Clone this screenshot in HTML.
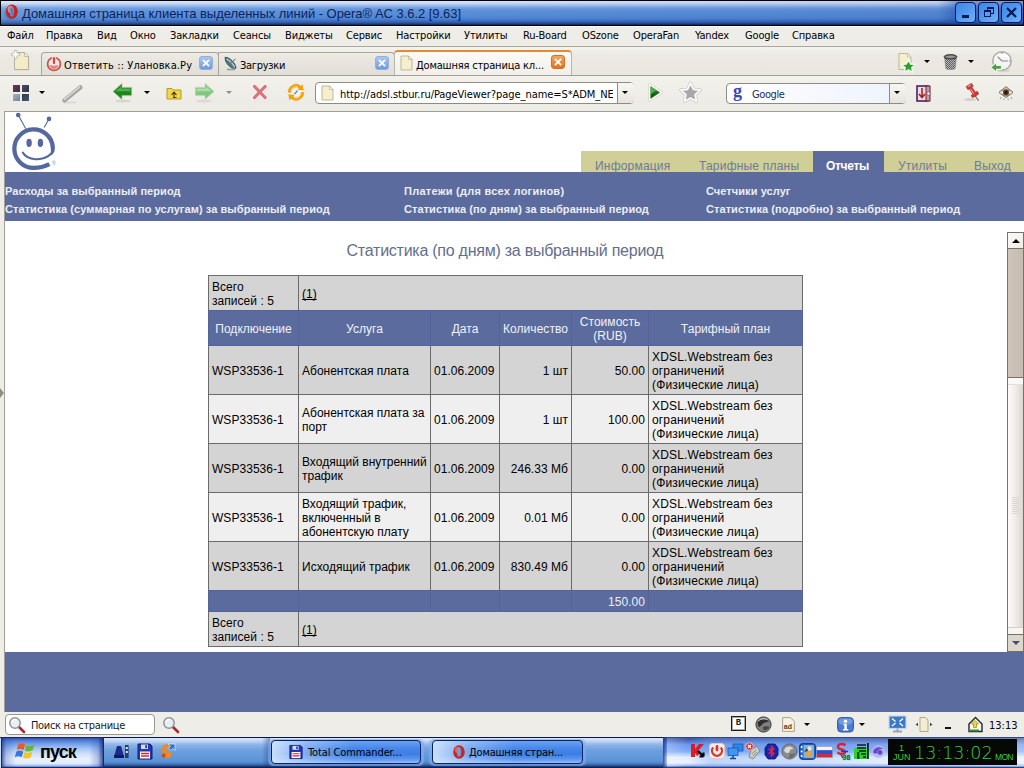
<!DOCTYPE html>
<html lang="ru">
<head>
<meta charset="utf-8">
<title>Домашняя страница клиента выделенных линий</title>
<style>
html,body{margin:0;padding:0;}
body{width:1024px;height:768px;overflow:hidden;position:relative;background:#efede7;font-family:"DejaVu Sans Condensed","DejaVu Sans","Liberation Sans",sans-serif;font-stretch:condensed;font-size:11px;color:#000;}
.abs{position:absolute;}
.t{position:absolute;white-space:nowrap;line-height:1;}
svg{position:absolute;overflow:visible;}
/* title bar */
#titlebar{left:0;top:0;width:1024px;height:26px;background:#000;}
#titlegrad{left:1px;top:1px;width:1022px;height:24px;background:linear-gradient(#d6e5fb 0%,#c6daf8 9%,#9fbfee 18%,#6d9cde 30%,#5b90d8 42%,#558bd5 60%,#4d84d2 72%,#3f72c4 81%,#2c58a6 90%,#1a3670 97%,#0c1c48 100%);}
#titleshade{left:1px;top:1px;width:1022px;height:24px;background:linear-gradient(90deg,rgba(255,255,255,.10) 0%,rgba(255,255,255,.04) 8%,rgba(255,255,255,0) 45%,rgba(10,40,120,.10) 100%);}
#titletext{left:22px;top:6px;font-family:"Liberation Sans",sans-serif;font-size:13px;line-height:15px;letter-spacing:-.04px;color:#0b1f5e;}
.wb{position:absolute;top:2px;width:19px;height:19px;border:1px solid #06185a;border-radius:4px;background:linear-gradient(135deg,#3f86e6 0%,#4f97ef 45%,#74b2f8 100%);}
/* menu */
#menubar{left:0;top:26px;width:1024px;height:20px;background:linear-gradient(#fbfaf8 0,#fbfaf8 1px,#efede7 1px);border-bottom:1px solid #aaa79c;}
.mi{position:absolute;top:29px;font-size:11px;white-space:nowrap;line-height:13px;letter-spacing:-.15px;}
/* tab bar */
#tabbar{left:0;top:47px;width:1024px;height:28px;background:linear-gradient(#f4f3ee,#ebe9e2 30%,#e9e7e0);border-bottom:1px solid #a39f94;}
.tab{position:absolute;top:52px;height:23px;box-sizing:border-box;border:1px solid #a8a59b;border-bottom:none;border-radius:4px 4px 0 0;background:linear-gradient(#eceae3,#e0ded6);}
#tab3{top:50px;height:25px;border:1px solid #b8b5ab;border-top:2px solid #e58a2e;background:linear-gradient(#fbfaf7,#f1efea);border-bottom:none;}
.tt{position:absolute;top:59px;font-size:11px;white-space:nowrap;line-height:13px;}
.cb{position:absolute;width:14px;height:14px;box-sizing:border-box;border-radius:3px;}
/* toolbar */
#toolbar{left:0;top:76px;width:1024px;height:35px;background:linear-gradient(#f3f1ec,#eceae4);}
.field{position:absolute;box-sizing:border-box;border:1px solid #8e8b82;border-radius:4px;background:#fff;}
.dd{position:absolute;width:0;height:0;border-left:3px solid transparent;border-right:3px solid transparent;border-top:3px solid #000;}
/* page */
#pageborder{left:4px;top:111px;width:1020px;height:601px;background:#a29f95;}
#page{left:5px;top:112px;width:1019px;height:600px;background:#fff;overflow:hidden;font-family:"Liberation Sans",sans-serif;font-size:12px;}
#statusbar{left:0;top:712px;width:1024px;height:26px;background:#efede7;}
#taskbar{left:0;top:737px;width:1024px;height:31px;background:linear-gradient(#0a1a5a 0,#080e2a 1px,#dde9fb 1px,#bfd5f5 4px,#8cb3e7 8px,#6fa0de 13px,#669adb 18px,#5b94d7 24px,#4a7ec4 26.5px,#3660a2 28px,#1c3876 29.5px,#08123c 31px);}
.tb{position:absolute;top:740px;height:24px;box-sizing:border-box;border:1px solid #0c2266;border-radius:4px;background:linear-gradient(90deg,rgba(225,238,255,.85) 0%,rgba(225,238,255,.35) 25%,rgba(255,255,255,0) 55%),linear-gradient(#6aa2f2 0%,#4586ea 35%,#3c7ee6 60%,#5a96ee 82%,#94bbf6 100%);}
</style>
</head>
<body>
<!-- TITLE BAR -->
<div id="titlebar" class="abs"></div>
<div id="titlegrad" class="abs"></div>
<div id="titleshade" class="abs"></div>
<div class="abs" style="left:938px;top:1px;width:85px;height:23px;background:linear-gradient(90deg,rgba(24,70,170,0),rgba(24,70,170,.42) 18px,rgba(24,70,170,.42))"></div>
<svg style="left:2px;top:3px" width="18" height="18" viewBox="0 0 18 18"><ellipse cx="8.6" cy="10" rx="6.2" ry="6.6" fill="#3a5a9a" opacity=".35"/><ellipse cx="9.9" cy="8.6" rx="5.9" ry="7.2" fill="#c4241c"/><ellipse cx="8.6" cy="6.4" rx="3" ry="3.6" fill="#f5a094" opacity=".75"/><ellipse cx="10" cy="8.8" rx="2.2" ry="4.9" fill="#5f8fd8"/><path d="M9 5.5C10 8 10.8 10 11.4 12.5" stroke="#c4241c" stroke-width="1" fill="none" opacity=".6"/></svg>
<div id="titletext" class="t">Домашняя страница клиента выделенных линий - Opera® AC 3.6.2 [9.63]</div>
<div class="wb" style="left:955px"><div class="abs" style="left:6px;top:12px;width:7px;height:3px;background:#06185a"></div></div>
<div class="wb" style="left:978px"><div class="abs" style="left:8px;top:4px;width:5px;height:4px;border:1px solid #06185a;border-top-width:2px"></div><div class="abs" style="left:5px;top:7px;width:5px;height:4px;border:1px solid #06185a;border-top-width:2px;background:#5a9cf0"></div></div>
<div class="wb" style="left:1001px"><svg style="left:4px;top:4px" width="11" height="11" viewBox="0 0 11 11"><path d="M1 1L10 10M10 1L1 10" stroke="#06185a" stroke-width="2.2"/></svg></div>

<!-- MENU BAR -->
<div id="menubar" class="abs"></div>
<div class="mi" style="left:7px">Файл</div>
<div class="mi" style="left:46px">Правка</div>
<div class="mi" style="left:97px">Вид</div>
<div class="mi" style="left:130px">Окно</div>
<div class="mi" style="left:170px">Закладки</div>
<div class="mi" style="left:233px">Сеансы</div>
<div class="mi" style="left:285px">Виджеты</div>
<div class="mi" style="left:346px">Сервис</div>
<div class="mi" style="left:396px">Настройки</div>
<div class="mi" style="left:464px">Утилиты</div>
<div class="mi" style="left:523px">Ru-Board</div>
<div class="mi" style="left:582px">OSzone</div>
<div class="mi" style="left:633px">OperaFan</div>
<div class="mi" style="left:695px">Yandex</div>
<div class="mi" style="left:745px">Google</div>
<div class="mi" style="left:792px">Справка</div>

<!-- TAB BAR -->
<div id="tabbar" class="abs"></div>
<!-- new page icon -->
<svg style="left:11px;top:50px" width="21" height="22" viewBox="0 0 21 22"><path d="M4.2 3H14L18.2 7.2V20.4H4.2Z" fill="#cfccc2" opacity=".55"/><path d="M3.5 2.5H13.5L17.5 6.5V19.5H3.5Z" fill="#f3ecc6" stroke="#b5b09c" stroke-width="1"/><path d="M13.5 2.5V6.5H17.5Z" fill="#fffbe8" stroke="#b5b09c" stroke-width=".8"/><path d="M4.6 1.6V7.4M1.7 4.5H7.5" stroke="#bdbbb4" stroke-width="3.6" stroke-linecap="round"/><path d="M4.6 2V7M2.1 4.5H7.1" stroke="#fff" stroke-width="2" stroke-linecap="round"/></svg>
<div class="tab" style="left:41px;width:178px"></div>
<div class="tab" style="left:218px;width:177px;border-top-left-radius:0"></div>
<div class="tab" id="tab3" style="left:394px;width:178px"></div>
<!-- tab1 icon: red power -->
<svg style="left:46px;top:55px" width="16" height="17" viewBox="0 0 16 17"><circle cx="8" cy="9" r="6.4" fill="#f9ecea" stroke="#d0504a" stroke-width="1.8"/><path d="M3.6 9.6A4.4 4.4 0 0 0 12.4 9.6C11 11 5 11 3.6 9.6Z" fill="#e8847c"/><rect x="6.3" y="1.6" width="3.4" height="8" rx="1.7" fill="#d8463e" stroke="#f9ecea" stroke-width="1"/></svg>
<div class="tt" style="left:64px;letter-spacing:.09px">Ответить :: Улановка.Ру</div>
<div class="cb" style="left:199px;top:56px;background:linear-gradient(#a9c6ee,#6f9bdc);border:1px solid #8fb0e2"><svg style="left:2px;top:2px" width="8" height="8" viewBox="0 0 9 9"><path d="M1 1L8 8M8 1L1 8" stroke="#fff" stroke-width="2"/></svg></div>
<!-- tab2 icon: dish -->
<svg style="left:223px;top:55px" width="16" height="17" viewBox="0 0 16 17"><path d="M2.2 2.2C7 2.5 12.5 8 13 13.2C9 15 1.2 8 2.2 2.2Z" fill="#557880" stroke="#2f4c54" stroke-width=".9"/><path d="M3.5 4C6.5 5 10.5 9 11.6 12.4" fill="none" stroke="#c9d8de" stroke-width="1.2"/><path d="M7.5 8L12.5 4" stroke="#4d6872" stroke-width="1"/><path d="M4 14.5H12" stroke="#8c9ea6" stroke-width="1.6"/></svg>
<div class="tt" style="left:240px;letter-spacing:-.3px">Загрузки</div>
<div class="cb" style="left:375px;top:56px;background:linear-gradient(#a9c6ee,#6f9bdc);border:1px solid #8fb0e2"><svg style="left:2px;top:2px" width="8" height="8" viewBox="0 0 9 9"><path d="M1 1L8 8M8 1L1 8" stroke="#fff" stroke-width="2"/></svg></div>
<!-- tab3 icon: page -->
<svg style="left:400px;top:55px" width="13" height="16" viewBox="0 0 13 16"><path d="M1 1H8.5L12 4.5V15H1Z" fill="#f5efcb" stroke="#bdb79c" stroke-width="1"/><path d="M8.5 1V4.5H12Z" fill="#fffdf0" stroke="#bdb79c" stroke-width=".8"/></svg>
<div class="tt" style="left:416px;letter-spacing:-.18px">Домашняя страница кл...</div>
<div class="cb" style="left:551px;top:55px;background:linear-gradient(#f3a664,#e0741c);border:1px solid #d96f1c"><svg style="left:2px;top:2px" width="8" height="8" viewBox="0 0 9 9"><path d="M1 1L8 8M8 1L1 8" stroke="#fff" stroke-width="2"/></svg></div>
<!-- right icons -->
<svg style="left:897px;top:52px" width="19" height="20" viewBox="0 0 19 20"><path d="M2 1.5H10.5L14 5V17.5H2Z" fill="#f5efcb" stroke="#bdb79c" stroke-width="1"/><path d="M10.5 1.5V5H14Z" fill="#fffdf0" stroke="#bdb79c" stroke-width=".8"/><path d="M11.5 7.6l2.1 4.3 4.7.6-3.5 3.2 1 4.7-4.3-2.4-4.3 2.4 1-4.7-3.5-3.2 4.7-.6z" fill="#2f9e2f" stroke="#f2f8ee" stroke-width="1.5" stroke-linejoin="round"/></svg>
<div class="dd" style="left:924px;top:60px"></div>
<svg style="left:942px;top:53px" width="17" height="18" viewBox="0 0 17 18"><defs><pattern id="mesh" width="2" height="2" patternUnits="userSpaceOnUse"><rect width="2" height="2" fill="#b9b9b9"/><rect width="1" height="1" fill="#5e5e5e"/><rect x="1" y="1" width="1" height="1" fill="#5e5e5e"/></pattern></defs><path d="M2.6 4.6L3.8 15.4C5 17 12 17 13.2 15.4L14.4 4.6Z" fill="url(#mesh)" stroke="#8a8a8a" stroke-width=".7"/><ellipse cx="8.5" cy="3.8" rx="6.4" ry="2.2" fill="#6a6a6a" stroke="#3c3c3c" stroke-width="1"/><ellipse cx="8.5" cy="3.8" rx="4.4" ry="1.1" fill="#9a9a9a"/></svg>
<div class="dd" style="left:968px;top:60px"></div>
<svg style="left:989px;top:50px" width="24" height="24" viewBox="0 0 24 24"><ellipse cx="13.5" cy="20.6" rx="8" ry="1.6" fill="#d7d4cc"/><circle cx="13" cy="11" r="9.2" fill="#f4f4f2" stroke="#b2b2ad" stroke-width="1.7"/><path d="M5.4 8.6A8 8 0 0 1 20.6 8.6C16 6.6 10 6.6 5.4 8.6Z" fill="#fff" opacity=".8"/><path d="M13 2.6V4M21.4 11H20M13 11L8.6 6.6M13 11H19" stroke="#8a8a8a" stroke-width="1.1"/><path d="M1.6 17.4L7.6 12.6V15.4H12.4V19.4H7.6V22.2Z" fill="#4aa046" stroke="#eef6ea" stroke-width="1.1" stroke-linejoin="round"/></svg>

<!-- TOOLBAR -->
<div id="toolbar" class="abs"></div>
<!-- panel icon -->
<div class="abs" style="left:13px;top:85px;width:7px;height:7px;background:linear-gradient(135deg,#6b3850,#3c3044)"></div>
<div class="abs" style="left:22px;top:85px;width:7px;height:7px;background:linear-gradient(135deg,#4c4c62,#2e3444)"></div>
<div class="abs" style="left:13px;top:94px;width:7px;height:7px;background:linear-gradient(135deg,#a5b5c8,#6c84a0)"></div>
<div class="abs" style="left:22px;top:94px;width:7px;height:7px;background:linear-gradient(135deg,#2e3a4c,#46566c)"></div>
<div class="dd" style="left:39px;top:91px"></div>
<!-- wand -->
<svg style="left:61px;top:84px" width="22" height="20" viewBox="0 0 22 20"><path d="M3 18.5H15" stroke="#d9d7d2" stroke-width="1.6"/><path d="M3.4 16.4L19.4 3.4" stroke="#a4a4a4" stroke-width="4.4" stroke-linecap="round"/><path d="M3.4 15.4L18.8 3" stroke="#dcdcdc" stroke-width="1.4" stroke-linecap="round"/></svg>
<!-- back -->
<svg style="left:111px;top:82px" width="23" height="21" viewBox="0 0 23 21"><ellipse cx="12" cy="19" rx="8" ry="1.4" fill="#d6d3cb"/><path d="M2 9.5L11 1.6V5.4H20.6V13.6H11V17.4Z" fill="#1f861f" stroke="#e6ece2" stroke-width="2.2" stroke-linejoin="round"/><path d="M2 9.5L11 1.6V5.4H20.6V13.6H11V17.4Z" fill="#1f861f" stroke="#b9c8b4" stroke-width=".5" stroke-linejoin="round"/><path d="M4.4 9.2L10 4.4V6.6H19.4V9.2Z" fill="#5cbc54" opacity=".8"/></svg>
<div class="dd" style="left:144px;top:91px"></div>
<!-- folder up -->
<svg style="left:166px;top:86px" width="16" height="14" viewBox="0 0 16 14"><path d="M1 2.5H6L7.5 4H15V13H1Z" fill="#f2d54e" stroke="#b99a1e" stroke-width="1"/><path d="M8 11.5V6.5M5.5 8.8L8 6.2L10.5 8.8M7 11.5H10.5" fill="none" stroke="#4a3c10" stroke-width="1.2"/></svg>
<!-- forward -->
<svg style="left:193px;top:82px" width="23" height="21" viewBox="0 0 23 21"><ellipse cx="11" cy="19" rx="8" ry="1.4" fill="#dcd9d2"/><path d="M21 9.5L12 1.6V5.4H2.4V13.6H12V17.4Z" fill="#84c67e" stroke="#e9eee6" stroke-width="2.2" stroke-linejoin="round"/><path d="M21 9.5L12 1.6V5.4H2.4V13.6H12V17.4Z" fill="#84c67e" stroke="#c4d2c0" stroke-width=".5" stroke-linejoin="round"/><path d="M18.6 9.2L13 4.4V6.6H3.6V9.2Z" fill="#b5e0b0" opacity=".85"/></svg>
<div class="dd" style="left:226px;top:91px;border-top-color:#8c8c8c"></div>
<!-- stop -->
<svg style="left:249px;top:82px" width="22" height="21" viewBox="0 0 22 21"><path d="M5.4 4.6L17 16.6M17 4.6L5.4 16.6" stroke="#e3dfd8" stroke-width="6.6" stroke-linecap="round" opacity=".7"/><path d="M5 4L16.6 16M16.6 4L5 16" stroke="#f8f1ef" stroke-width="6" stroke-linecap="round"/><path d="M5.4 4.4L16.2 15.6M16.2 4.4L5.4 15.6" stroke="#d6747a" stroke-width="3" stroke-linecap="round"/></svg>
<!-- reload -->
<svg style="left:284px;top:81px" width="24" height="23" viewBox="0 0 24 23"><path d="M12 1.2L22.6 11.4L12 21.6L1.4 11.4Z" fill="#f5f3ee" stroke="#dedbd2" stroke-width=".8"/><path d="M5.6 11.6A6.4 6.4 0 0 1 16.4 6.6" fill="none" stroke="#f2a012" stroke-width="3.2"/><path d="M18.4 11.2A6.4 6.4 0 0 1 7.6 16.2" fill="none" stroke="#f2a012" stroke-width="3.2"/><path d="M13.4 8.8L19.6 9.6L18.6 3.2Z" fill="#f2a012"/><path d="M10.6 14L4.4 13.2L5.4 19.6Z" fill="#f2a012"/><path d="M6.8 9.4A5.4 5.4 0 0 1 14 6" fill="none" stroke="#fbd668" stroke-width="1"/><path d="M17.2 13.4A5.4 5.4 0 0 1 10 16.8" fill="none" stroke="#fbd668" stroke-width="1"/><path d="M10.4 13.2L13.6 9.6" stroke="#4a78c8" stroke-width="1.2"/></svg>
<!-- URL field -->
<div class="field" style="left:315px;top:82px;width:319px;height:22px"></div>
<div class="abs" style="left:617px;top:83px;width:16px;height:20px;border-left:1px solid #8e8b82;border-radius:0 3px 3px 0;background:linear-gradient(#f8f7f3,#e6e4dd)"></div>
<div class="dd" style="left:622px;top:91px"></div>
<svg style="left:321px;top:85px" width="13" height="16" viewBox="0 0 13 16"><path d="M1 1H8.5L12 4.5V15H1Z" fill="#f5efcb" stroke="#bdb79c" stroke-width="1"/><path d="M8.5 1V4.5H12Z" fill="#fffdf0" stroke="#bdb79c" stroke-width=".8"/></svg>
<div class="t" style="left:340px;top:88px;font-size:11px;line-height:13px;width:273px;overflow:hidden;letter-spacing:-.06px">http://adsl.stbur.ru/PageViewer?page_name=S*ADM_NEW</div>
<!-- play -->
<svg style="left:647px;top:82px" width="17" height="21" viewBox="0 0 17 21"><path d="M2.6 2.6L14.6 10.5L2.6 18.4Z" fill="none" stroke="#d2cfc8" stroke-width="2.8" stroke-linejoin="round"/><path d="M2.6 2.6L14.6 10.5L2.6 18.4Z" fill="#1f7a1f" stroke="#f6f8f4" stroke-width="1.7" stroke-linejoin="round"/><path d="M3.8 4.8L9.6 8.6C7 9.6 5 11 3.8 12.6Z" fill="#5cb854" opacity=".85"/><path d="M3.8 12.6L11.6 10.5L3.8 16.2Z" fill="#0e4e12" opacity=".7"/></svg>
<!-- star -->
<svg style="left:679px;top:81px" width="23" height="22" viewBox="0 0 23 22"><path d="M11.5 2l2.9 6.2 6.8.9-5 4.7 1.3 6.7-6-3.3-6 3.3 1.3-6.7-5-4.7 6.8-.9z" fill="none" stroke="#c4c1ba" stroke-width="3" stroke-linejoin="round"/><path d="M11.5 2l2.9 6.2 6.8.9-5 4.7 1.3 6.7-6-3.3-6 3.3 1.3-6.7-5-4.7 6.8-.9z" fill="#a8a8a8" stroke="#fafafa" stroke-width="1.9" stroke-linejoin="round"/></svg>
<!-- search field -->
<div class="field" style="left:726px;top:83px;width:180px;height:21px;background:linear-gradient(90deg,#fff,#f4f7fd 60%,#eef3fc)"></div>
<div class="abs" style="left:889px;top:84px;width:16px;height:19px;border-left:1px solid #8e8b82;border-radius:0 3px 3px 0;background:linear-gradient(#f8f7f3,#e6e4dd)"></div>
<div class="dd" style="left:894px;top:91px"></div>
<div class="t" style="left:733px;top:82px;font-family:'Liberation Serif',serif;font-weight:bold;font-size:18px;color:#3a46b8">g</div>
<div class="t" style="left:752px;top:88px;font-size:11px;line-height:13px;letter-spacing:-.4px;color:#1c2a58">Google</div>
<!-- purple icon -->
<svg style="left:916px;top:85px" width="16" height="17" viewBox="0 0 16 17"><rect x="1" y="1" width="11" height="15" fill="#e8dede" stroke="#4a1e6a" stroke-width="1.6"/><rect x="10" y="1" width="4" height="15" fill="#b8a0b0" stroke="#7a1a2a" stroke-width="1"/><path d="M6 3V12M3 9L6 12.5L9 9" fill="none" stroke="#b0141c" stroke-width="1.5"/><circle cx="12.5" cy="8.5" r="1.6" fill="#fff" stroke="#6a3a5a" stroke-width=".6"/></svg>
<!-- pin -->
<svg style="left:962px;top:81px" width="20" height="22" viewBox="0 0 20 22"><ellipse cx="8" cy="18.6" rx="6" ry="1.5" fill="#d5d2ca"/><path d="M12.6 14.2L16.6 19.6" stroke="#77736c" stroke-width="1.2"/><path d="M4.2 5.6L9.4 2.4L11.2 5.2L9.8 6.2L13.2 11.2L15.4 10.6L16.6 13L10.6 16.6L9.2 14.6L10.8 13L7.4 7.8L5.8 8.4Z" fill="#d63a36" stroke="#8e1d1c" stroke-width=".7" stroke-linejoin="round"/><path d="M5.6 5.8L9 3.8M8.6 8L11.6 12.6" stroke="#f39c96" stroke-width="1.1" fill="none"/></svg>
<!-- eye -->
<svg style="left:997px;top:84px" width="18" height="17" viewBox="0 0 18 17"><path d="M2 8.4L9 2.6L16 8.4L9 13.6Z" fill="#c8c3b8" stroke="#7d776c" stroke-width="1"/><path d="M2 8.4C5 5 13 5 16 8.4C13 12 5 12 2 8.4Z" fill="#e9e5dc" stroke="#6b655a" stroke-width=".7"/><circle cx="9" cy="8.4" r="3" fill="#5d3c1a"/><circle cx="9" cy="8.4" r="1.3" fill="#1a0e04"/><path d="M4 13L3.2 15M7 14.4L6.8 16.2M11 14.4L11.2 16.2M14 13L14.8 15" stroke="#8c867a" stroke-width=".8"/></svg>
<!-- PAGE -->
<div id="pageborder" class="abs"></div>
<div id="page" class="abs">
<style>
#page .olive{position:absolute;left:576px;top:39px;width:443px;height:21px;background:#d0cf97;}
#page .acttab{position:absolute;left:808px;top:39px;width:71px;height:21px;background:#5b6b9e;}
#page .band{position:absolute;left:0;top:60px;width:1019px;height:49px;background:#5b6b9e;}
#page .nt{position:absolute;top:47px;font-size:12px;line-height:14px;color:#6d7a98;white-space:nowrap;letter-spacing:.2px;}
#page .sn{position:absolute;font-size:11px;line-height:13px;font-weight:bold;color:#eceef5;white-space:nowrap;letter-spacing:.07px;}
#page h1{position:absolute;left:-1px;top:130px;width:1002px;margin:0;text-align:center;font-size:16px;line-height:18px;font-weight:normal;color:#636e8d;letter-spacing:-.25px;}
#stat{position:absolute;left:203px;top:163px;border-collapse:separate;border-spacing:1px;background:#6b6b6b;table-layout:fixed;width:595px;font-size:12px;line-height:14px;color:#000;}
#stat td,#stat th{padding:4px 3px 2px 3px;white-space:nowrap;vertical-align:middle;font-weight:normal;text-align:left;overflow:hidden;letter-spacing:.04px;}
#stat td:nth-child(6){letter-spacing:.16px;}
#stat td:nth-child(2){letter-spacing:0;}
#stat th{background:#5b6b9e;color:#f1f2f8;text-align:center;box-shadow:0 0 0 1px #54649a;}
#stat .g td{background:#d4d4d4;}
#stat .w td{background:#efefef;}
#stat .tot td{background:#5b6b9e;color:#eceef5;box-shadow:0 0 0 1px #54649a;}
#stat td.r{text-align:right;}
#stat a{color:#000;text-decoration:underline;text-decoration-skip-ink:none;text-underline-offset:1px;}
#footband{position:absolute;left:0;top:540px;width:1019px;height:60px;background:#5b6b9e;}
</style>
<!-- logo -->
<svg style="left:3px;top:0px" width="56" height="60" viewBox="8 112 56 60"><g fill="none" stroke="#5467a0"><path d="M52.8 147.2A19.25 19.25 0 1 0 33.6 167.95A34.7 34.7 0 0 0 49.4 164.15" stroke-width="4.3"/><path d="M25.8 128.8L18.2 115" stroke-width="1.1"/><path d="M44.1 127.6L49 118.9" stroke-width="1.1"/><path d="M22.8 152.6C27 160.5 43 162 51.4 153.6" stroke-width="2.1" stroke-linecap="round"/></g><g fill="#5467a0"><path d="M54.95 146.8L54.5 151.6L52 155L50.6 154L50.95 150.5L50.65 146.8Z"/><circle cx="18.2" cy="115" r="2.3"/><circle cx="49" cy="118.9" r="2.3"/><ellipse cx="29.1" cy="142.9" rx="2.7" ry="4.1"/><ellipse cx="40.4" cy="142.9" rx="2.7" ry="4.1"/></g><text x="52.3" y="164.6" font-size="4.6" fill="#6f7fae" font-family="Liberation Sans,sans-serif">®</text></svg>
<div class="olive"></div><div class="acttab"></div><div class="band"></div>
<div class="nt" style="left:590px">Информация</div>
<div class="nt" style="left:694px">Тарифные планы</div>
<div class="nt" style="left:821px;font-weight:bold;color:#fff;letter-spacing:-.3px">Отчеты</div>
<div class="nt" style="left:893px">Утилиты</div>
<div class="nt" style="left:969px">Выход</div>
<div class="sn" style="left:0px;top:73px">Расходы за выбранный период</div>
<div class="sn" style="left:0px;top:91px">Статистика (суммарная по услугам) за выбранный период</div>
<div class="sn" style="left:399px;top:73px;letter-spacing:.26px">Платежи (для всех логинов)</div>
<div class="sn" style="left:399px;top:91px">Статистика (по дням) за выбранный период</div>
<div class="sn" style="left:701px;top:73px">Счетчики услуг</div>
<div class="sn" style="left:701px;top:91px">Статистика (подробно) за выбранный период</div>
<h1>Статистика (по дням) за выбранный период</h1>
<table id="stat" cellspacing="1" cellpadding="0">
<colgroup><col style="width:89px"><col style="width:131px"><col style="width:68px"><col style="width:71px"><col style="width:76px"><col style="width:153px"></colgroup>
<tr class="g" style="height:34px"><td>Всего<br>записей : 5</td><td colspan="5"><a>(1)</a></td></tr>
<tr style="height:34px"><th>Подключение</th><th>Услуга</th><th>Дата</th><th>Количество</th><th>Стоимость<br>(RUB)</th><th>Тарифный план</th></tr>
<tr class="g" style="height:48px"><td>WSP33536-1</td><td>Абонентская плата</td><td>01.06.2009</td><td class="r">1 шт</td><td class="r">50.00</td><td>XDSL.Webstream без<br>ограничений<br>(Физические лица)</td></tr>
<tr class="w" style="height:48px"><td>WSP33536-1</td><td>Абонентская плата за<br>порт</td><td>01.06.2009</td><td class="r">1 шт</td><td class="r">100.00</td><td>XDSL.Webstream без<br>ограничений<br>(Физические лица)</td></tr>
<tr class="g" style="height:48px"><td>WSP33536-1</td><td>Входящий внутренний<br>трафик</td><td>01.06.2009</td><td class="r">246.33 Мб</td><td class="r">0.00</td><td>XDSL.Webstream без<br>ограничений<br>(Физические лица)</td></tr>
<tr class="w" style="height:48px"><td>WSP33536-1</td><td>Входящий трафик,<br>включенный в<br>абонентскую плату</td><td>01.06.2009</td><td class="r">0.01 Мб</td><td class="r">0.00</td><td>XDSL.Webstream без<br>ограничений<br>(Физические лица)</td></tr>
<tr class="g" style="height:48px"><td>WSP33536-1</td><td>Исходящий трафик</td><td>01.06.2009</td><td class="r">830.49 Мб</td><td class="r">0.00</td><td>XDSL.Webstream без<br>ограничений<br>(Физические лица)</td></tr>
<tr class="tot" style="height:20px"><td></td><td></td><td></td><td></td><td class="r">150.00</td><td></td></tr>
<tr class="g" style="height:34px"><td>Всего<br>записей : 5</td><td colspan="5"><a>(1)</a></td></tr>
</table>
<div id="footband"></div>
<!-- scrollbar (page coords: screen - (5,112)) -->
<div class="abs" style="left:1002px;top:120px;width:17px;height:420px;background:#77716a"></div>
<div class="abs" style="left:1003px;top:121px;width:15px;height:15px;background:linear-gradient(135deg,#fbfaf8,#efece7)"></div>
<div class="abs" style="left:1007px;top:127px;width:0;height:0;border-left:4px solid transparent;border-right:4px solid transparent;border-bottom:4px solid #000"></div>
<div class="abs" style="left:1003px;top:137px;width:15px;height:128px;background:linear-gradient(90deg,#cdc4ba,#c6bcb1)"></div>
<div class="abs" style="left:1003px;top:266px;width:15px;height:256px;background:linear-gradient(90deg,#fcfbfa,#f1edea 45%,#ddd6d0)"></div>
<div class="abs" style="left:1003px;top:266px;width:15px;height:6px;background:#faf8f6;border-bottom:1px solid #e4dfda"></div>
<div class="abs" style="left:1003px;top:515px;width:15px;height:6px;background:#f8f5f1;border-top:1px solid #d8d2cc"></div>
<div class="abs" style="left:1007px;top:385px;width:7px;height:17px;background:repeating-linear-gradient(#d6cfc8 0 1px,transparent 1px 2px);opacity:.8"></div>
<div class="abs" style="left:1003px;top:523px;width:15px;height:16px;background:#ddd6cd"></div>
<div class="abs" style="left:1007px;top:529px;width:0;height:0;border-left:4px solid transparent;border-right:4px solid transparent;border-top:4px solid #4c4c68"></div>


</div>
<div class="abs" style="left:0;top:388px;width:0;height:0;border-top:5px solid transparent;border-bottom:5px solid transparent;border-left:4px solid #8f8d84"></div>
<!-- STATUS BAR -->
<div id="statusbar" class="abs"></div>
<div class="field" style="left:5px;top:714px;width:150px;height:21px;border-color:#9a978e"></div>
<svg style="left:8px;top:716px" width="18" height="18" viewBox="0 0 18 18"><path d="M10.5 10.5L16 16" stroke="#a82a2a" stroke-width="2.6" stroke-linecap="round"/><circle cx="7" cy="7" r="5.2" fill="#e8eef2" stroke="#8e959a" stroke-width="1.5"/><path d="M4 6A3.4 3.4 0 0 1 8 3.6" fill="none" stroke="#fff" stroke-width="1.2"/></svg>
<div class="t" style="left:31px;top:719px;font-size:11px;line-height:13px;letter-spacing:-.32px;color:#1a1a1a">Поиск на странице</div>
<svg style="left:162px;top:716px" width="18" height="18" viewBox="0 0 18 18"><path d="M10.5 10.5L16 16" stroke="#a82a2a" stroke-width="2.6" stroke-linecap="round"/><circle cx="7" cy="7" r="5.2" fill="#e8eef2" stroke="#8e959a" stroke-width="1.5"/><path d="M4 6A3.4 3.4 0 0 1 8 3.6" fill="none" stroke="#fff" stroke-width="1.2"/></svg>
<!-- right status icons -->
<div class="abs" style="left:731px;top:716px;width:13px;height:13px;border:1px solid #1c1c1c;box-shadow:inset 0 0 0 1px #a9a9a9;background:#fff;font:bold 9px/13px 'Liberation Mono',monospace;text-align:center;color:#222">B</div>
<svg style="left:755px;top:716px" width="17" height="17" viewBox="0 0 17 17"><circle cx="8.5" cy="8.5" r="7.6" fill="#7e7e7e" stroke="#3e3e3e" stroke-width="1"/><path d="M2.6 6.4C5 2.6 11 2.4 14 5.4C11 6 9 6.4 7.6 8C6 9.6 5 11.6 3.4 10.4Z" fill="#2e2e2e"/><path d="M8 11C10 10 13 10 14.4 11C13 13.6 10 14.6 8.4 14Z" fill="#444"/><path d="M3.6 4.6C6 2.4 10 2.2 12.4 3.6" stroke="#cfcfcf" stroke-width="1" fill="none"/></svg>
<svg style="left:782px;top:717px" width="13" height="15" viewBox="0 0 13 15"><path d="M.6 .6H8.4L12.4 4.4V14.4H.6Z" fill="#f6f1e2" stroke="#a9a28c" stroke-width="1"/><text x="1.8" y="11.6" font-size="7" font-family="Liberation Sans,sans-serif" font-weight="bold" fill="#5a3a1a">ad</text></svg>
<div class="dd" style="left:804px;top:723px"></div>
<svg style="left:837px;top:717px" width="17" height="16" viewBox="0 0 17 16"><rect x=".6" y=".6" width="15.8" height="14.4" rx="3.6" fill="#4a7cd0" stroke="#2c58a8" stroke-width="1"/><rect x="1.6" y="1.4" width="13.8" height="6" rx="2.8" fill="#8ab2ec" opacity=".6"/><circle cx="8.5" cy="4.2" r="1.7" fill="#fff"/><path d="M6.4 6.8H9.8V12H11.2V13.4H6V12H7.4V8.2H6.4Z" fill="#fff"/></svg>
<div class="dd" style="left:859px;top:723px"></div>
<svg style="left:888px;top:715px" width="19" height="19" viewBox="0 0 19 19"><rect x="1" y="1" width="17" height="12.5" fill="#3a78cc" stroke="#c8d4e4" stroke-width="1.2"/><path d="M4 3.5L7.5 6.5M15 3.5L11.5 6.5M4 11L7.5 8M15 11L11.5 8" stroke="#fff" stroke-width="1.4"/><path d="M5 16.5H14" stroke="#9aa4b2" stroke-width="2"/><path d="M9.5 13.5V16" stroke="#9aa4b2" stroke-width="2"/></svg>
<svg style="left:915px;top:716px" width="18" height="17" viewBox="0 0 18 17"><path d="M5 1.5H10.5L13 4V15.5H5Z" fill="#f3ecd2" stroke="#b0a98e" stroke-width="1"/><path d="M0.5 8.5L3 6.8V10.2ZM17.5 8.5L15 6.8V10.2Z" fill="#444"/></svg>
<div class="abs" style="left:945px;top:727px;width:6px;height:2px;background:#111"></div>
<svg style="left:967px;top:715px" width="17" height="18" viewBox="0 0 17 18"><path d="M2 9L8.5 2.5L15 9V16.5H2Z" fill="#f7f7f7" stroke="#222" stroke-width="1.4"/><path d="M4.5 9L8 5.5L11.5 9H9.5V12.5H6.5V9Z" fill="#e8e02a" stroke="#7a7610" stroke-width=".6"/><path d="M2 14.5H12V16.5H2Z" fill="#3c8a3c"/></svg>
<div class="t" style="left:989px;top:719px;font-size:11px;line-height:13px">13:13</div>

<!-- TASKBAR -->
<div id="taskbar" class="abs"></div>
<!-- start button -->
<div class="abs" style="left:0;top:737px;width:104px;height:31px;background:#16266e"></div>
<div class="abs" style="left:0;top:738px;width:1px;height:30px;background:#cfe0f8"></div>
<div class="abs" style="left:2px;top:738px;width:101px;height:29px;background:linear-gradient(#34509f 0%,#4f7ad2 8%,#739ee8 20%,#a4c3f2 36%,#cfdff9 54%,#e9f1fd 72%,#e0ebfb 88%,#a8c2ee 95%,#5a7ac8 100%)"></div>
<div class="abs" style="left:2px;top:738px;width:101px;height:29px;background:linear-gradient(90deg,rgba(28,50,130,.7) 0%,rgba(40,80,180,.28) 4%,rgba(60,110,210,0) 14%,rgba(60,110,210,0) 86%,rgba(40,80,180,.3) 95%,rgba(20,40,120,.8) 100%)"></div>
<svg style="left:14px;top:741px" width="23" height="21" viewBox="0 0 22 20"><path d="M4 3.2C6.6 1.6 8.6 2 10.6 3.6L9.2 8.8C7.2 7.4 5.2 7.2 2.6 8.6Z" fill="#ee5a24"/><path d="M11.8 4C14.2 5.4 16.6 5 19.4 3.4L18 8.6C15.2 10.2 12.8 10.4 10.4 9.2Z" fill="#62b830"/><path d="M2.2 10C4.8 8.6 6.8 8.8 8.8 10.2L7.4 15.6C5.4 14.2 3.4 14 .8 15.4Z" fill="#3a74e0"/><path d="M10 10.6C12.4 11.8 14.8 11.6 17.6 10L16.2 15.4C13.4 17 11 17.2 8.6 16Z" fill="#f4c326"/></svg>
<div class="t" style="left:40px;top:742px;font-family:'Liberation Sans',sans-serif;font-weight:bold;font-size:18px;line-height:20px;letter-spacing:-.9px;color:#000">пуск</div>
<!-- quick launch -->
<svg style="left:113px;top:743px" width="17" height="17" viewBox="0 0 17 17"><path d="M1 14L4 3H8L11 14Z" fill="#1a2a8a"/><rect x="1" y="12" width="10" height="3" fill="#0e1a66"/><rect x="12" y="2" width="3.6" height="13" fill="#2a3a6a"/><rect x="12.8" y="4" width="2" height="2" fill="#dfe6f6"/><rect x="12.8" y="8" width="2" height="2" fill="#dfe6f6"/></svg>
<svg style="left:137px;top:743px" width="16" height="17" viewBox="0 0 16 17"><path d="M1 1H13L15 3V16H1Z" fill="#2436b0" stroke="#10206e" stroke-width="1"/><rect x="4" y="1.5" width="7" height="4.5" fill="#d6dcf0"/><rect x="8.2" y="2.2" width="1.8" height="3" fill="#2436b0"/><rect x="3" y="8.5" width="10" height="7" fill="#fff"/><path d="M4 10.5H12M4 13H12" stroke="#d8282a" stroke-width="1.4"/></svg>
<svg style="left:159px;top:743px" width="17" height="17" viewBox="0 0 17 17"><path d="M12.5 4C9 1.5 4.5 3 4.5 6.2C4.5 9.5 11 8.6 11 11.4C11 13.6 6.6 13.8 3.6 11.6" fill="none" stroke="#f08a1a" stroke-width="3.4" stroke-linecap="round"/><path d="M9 1H16V7.5L13.8 5.4L11.6 7.4L9.6 5.2L11.4 3.2Z" fill="#2a74d8" stroke="#e9f0fb" stroke-width=".7"/><circle cx="4.6" cy="12.4" r="2" fill="#d8421a"/></svg>
<!-- task buttons -->
<div class="abs" style="left:262px;top:738px;width:8px;height:29px;background:linear-gradient(90deg,rgba(30,50,130,0),rgba(30,50,130,.45))"></div>
<div class="abs" style="left:268px;top:739px;width:156px;height:27px;border-radius:5px;background:rgba(130,175,240,.6)"></div>
<div class="abs" style="left:429px;top:739px;width:157px;height:27px;border-radius:5px;background:rgba(130,175,240,.6)"></div>
<div class="tb" style="left:271px;width:150px"></div>
<div class="tb" style="left:432px;width:151px"></div>
<svg style="left:289px;top:744px" width="14" height="16" viewBox="0 0 16 17"><path d="M1 1H13L15 3V16H1Z" fill="#2436b0" stroke="#10206e" stroke-width="1"/><rect x="4" y="1.5" width="7" height="4.5" fill="#d6dcf0"/><rect x="8.2" y="2.2" width="1.8" height="3" fill="#2436b0"/><rect x="3" y="8.5" width="10" height="7" fill="#fff"/><path d="M4 10.5H12M4 13H12" stroke="#d8282a" stroke-width="1.4"/></svg>
<div class="t" style="left:308px;top:746px;font-size:11px;line-height:13px;letter-spacing:-.1px">Total Commander...</div>
<svg style="left:452px;top:744px" width="14" height="16" viewBox="0 0 16 18"><ellipse cx="8" cy="9" rx="6.6" ry="7.6" fill="#c8261e"/><ellipse cx="6.4" cy="6.5" rx="3.2" ry="3.6" fill="#f07a6a" opacity=".7"/><ellipse cx="8" cy="9" rx="2.5" ry="5.3" fill="#6e9ade"/></svg>
<div class="t" style="left:469px;top:746px;font-size:11px;line-height:13px;letter-spacing:-.2px">Домашняя стран...</div>
<!-- tray -->
<div class="abs" style="left:663px;top:737px;width:361px;height:31px;background:linear-gradient(#2c4288 0%,#4664b4 10%,#6a96ec 24%,#80acf6 46%,#b4cef9 56%,#e4eefd 66%,#e9f1fd 84%,#a4bcea 92%,#3a58b0 97%,#10205e 100%)"></div>
<div class="abs" style="left:663px;top:737px;width:4px;height:31px;background:linear-gradient(90deg,rgba(30,55,150,.9),rgba(30,55,150,.2))"></div>
<div class="abs" style="left:667px;top:738px;width:357px;height:29px;background:linear-gradient(90deg,rgba(255,255,255,.25) 0%,rgba(120,165,240,.0) 6%,rgba(120,165,240,.35) 12%,rgba(140,180,245,.3) 40%,rgba(255,255,255,.15) 70%,rgba(255,255,255,.3) 100%)"></div>
<!-- K -->
<svg style="left:690px;top:743px" width="16" height="16" viewBox="0 0 16 16"><path d="M1 1H5V6L9 1H14L8 8L10 10.5L7 13L5 10V14H1Z" fill="#e01a22"/><path d="M8 8L13.5 13.5M13.5 13.5V9.5M13.5 13.5H9.5" stroke="#000" stroke-width="2.2" fill="none"/></svg>
<!-- red power -->
<svg style="left:709px;top:743px" width="16" height="16" viewBox="0 0 16 16"><rect x=".5" y=".5" width="15" height="15" rx="3" fill="#f7ecea" stroke="#e4c8c4" stroke-width="1"/><path d="M4.2 4.5A5 5 0 1 0 11.8 4.5" fill="none" stroke="#d23a30" stroke-width="2.3"/><rect x="6.6" y="2" width="2.8" height="6.5" rx="1.4" fill="#d23a30"/></svg>
<!-- network -->
<svg style="left:727px;top:743px" width="17" height="17" viewBox="0 0 17 17"><rect x="6" y="1" width="10" height="7" fill="#2f86e6" stroke="#1a56b0" stroke-width=".8"/><rect x="1" y="5" width="10" height="7.5" fill="#3f96f0" stroke="#1a56b0" stroke-width=".8"/><path d="M6 12.5V15M3 15.5H9" stroke="#1c4a94" stroke-width="1.6"/></svg>
<!-- x tool -->
<svg style="left:745px;top:742px" width="16" height="18" viewBox="0 0 16 18"><path d="M6 8L12 4L15 9L8 17L4 15Z" fill="#c9c9c4" stroke="#77776f" stroke-width=".8"/><path d="M7 12L11 8M8 14L12 10" stroke="#8c8c84" stroke-width=".9"/><circle cx="4.5" cy="4.5" r="3.8" fill="#e02a2a" stroke="#f5dada" stroke-width=".7"/><path d="M3 3L6 6M6 3L3 6" stroke="#fff" stroke-width="1.2"/></svg>
<!-- bluetooth -->
<svg style="left:764px;top:743px" width="15" height="17" viewBox="0 0 15 17"><path d="M4 1H11L14 5V12L11 16H4L1 12V5Z" fill="#1624b0" stroke="#0a1270" stroke-width=".8"/><path d="M4.5 5.5L10 10.5L7.5 13V3.5L10 6L4.5 11" fill="none" stroke="#ea2434" stroke-width="1.4"/></svg>
<!-- gray ball -->
<svg style="left:781px;top:743px" width="17" height="17" viewBox="0 0 17 17"><circle cx="8.5" cy="8.5" r="7.6" fill="#8c8c8c" stroke="#5c5c5c" stroke-width=".8"/><path d="M3 7C5 2.5 11 2.5 12.5 6C10 5.5 8 7.5 8.5 9.5C6 10.5 3.5 9.5 3 7Z" fill="#d9d9d9"/><path d="M8.5 9.5C10 12 13 11 14.5 9C14 13 11 15.5 7.5 15C8.5 13.5 9 11.5 8.5 9.5Z" fill="#6a6a6a"/></svg>
<!-- film -->
<svg style="left:799px;top:743px" width="17" height="17" viewBox="0 0 17 17"><rect x=".7" y=".7" width="15.6" height="15.6" rx="2.5" fill="#2a68c4" stroke="#0c2a6a" stroke-width="1"/><rect x="4.5" y="2" width="10.5" height="13" fill="#7ab0ea"/><circle cx="2.6" cy="4" r="1" fill="#fff"/><circle cx="2.6" cy="8.5" r="1" fill="#fff"/><circle cx="2.6" cy="13" r="1" fill="#fff"/><path d="M6 13C7 9 9 7 11 8C13 9 13.5 12 12 14Z" fill="#e8a23a"/><circle cx="10.5" cy="5.5" r="2.2" fill="#f4e4c0"/><path d="M5 9L8 5L9 8Z" fill="#3c3c3c"/></svg>
<!-- flag -->
<svg style="left:816px;top:746px" width="17" height="12" viewBox="0 0 17 12"><rect x=".5" y=".5" width="16" height="4" fill="#f4f4f4"/><rect x=".5" y="4.2" width="16" height="3.8" fill="#2a50d0"/><rect x=".5" y="7.8" width="16" height="3.7" fill="#d82a32"/><rect x=".5" y=".5" width="16" height="11" fill="none" stroke="#8898b8" stroke-width=".6"/></svg>
<!-- S -->
<svg style="left:835px;top:742px" width="18" height="19" viewBox="0 0 18 19"><path d="M10.5 3.2C7 0.8 2.6 2.2 3 5.2C3.4 8.2 10 6.8 10 10C10 12.4 5.6 12.6 2.4 10.4" fill="none" stroke="#e0202a" stroke-width="2.4"/><path d="M6 9.5H13M6 13L8 16" stroke="#2038c8" stroke-width="1.3"/><text x="7.5" y="17.5" font-size="7" font-weight="bold" font-family="Liberation Sans,sans-serif" fill="#0c8a1c" stroke="#063" stroke-width=".3">98</text></svg>
<!-- green bars -->
<svg style="left:854px;top:742px" width="16" height="18" viewBox="0 0 16 18"><rect x="0" y="6" width="13" height="11" fill="#2ed22e"/><path d="M3 3H12M3 6H12M5 9H12M7 12H12M9 15H12" stroke="#0a200a" stroke-width="1.6"/><rect x="13" y="1" width="1.8" height="16" fill="#0a200a"/><rect x="3" y="10" width="2.4" height="7" fill="#0a5a0a"/></svg>
<!-- purple swirl -->
<svg style="left:871px;top:744px" width="15" height="15" viewBox="0 0 15 15"><circle cx="7.5" cy="7.5" r="6.5" fill="#b8b4ea" opacity=".85"/><path d="M2 8C3 3 9 2 12 5C9 4.5 6 6 6.5 9C4.5 10 2.5 9.5 2 8Z" fill="#6a4ad0"/><circle cx="9" cy="8.5" r="2.4" fill="#5030b8" opacity=".8"/></svg>

<div class="abs" style="left:888px;top:739px;width:129px;height:26px;background:#050805"></div>
<div class="t" style="left:893px;top:744px;width:17px;text-align:center;font-family:'Liberation Sans',sans-serif;font-size:9px;line-height:9px;color:#3ccc3c">1</div>
<div class="t" style="left:893px;top:752px;font-family:'Liberation Sans',sans-serif;font-size:9px;line-height:10px;color:#3ccc3c;letter-spacing:0">JUN</div>
<div class="t" style="left:914px;top:743px;font-family:'DejaVu Sans Light','DejaVu Sans',sans-serif;font-weight:200;font-size:17.5px;line-height:20px;color:#3ccc3c;letter-spacing:0">13:13:02</div>
<div class="t" style="left:995px;top:752px;font-family:'Liberation Sans',sans-serif;font-size:8.5px;line-height:10px;color:#3ccc3c;letter-spacing:-.7px">MON</div>
</body>
</html>
